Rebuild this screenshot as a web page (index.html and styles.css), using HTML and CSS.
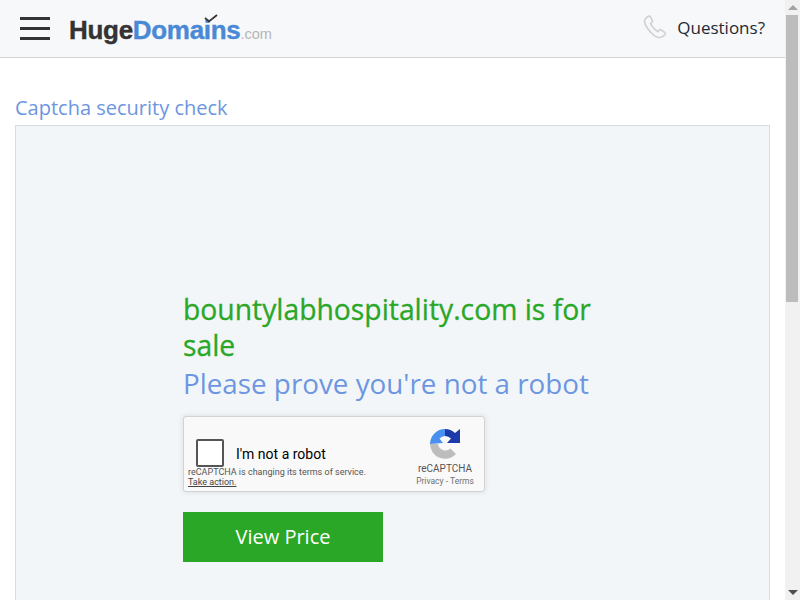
FILE: index.html
```html
<!DOCTYPE html>
<html lang="en">
<head>
<meta charset="UTF-8">
<meta name="viewport" content="width=device-width, initial-scale=1.0">
<title>Captcha security check</title>
<link rel="stylesheet" href="styles.css">
</head>
<body>

<div class="page">
    <header class="top-bar">
        <div class="top-left">
            <div class="burger"><span></span><span></span><span></span></div>
            <div class="logo">
                <span class="logo-huge">Huge</span><span class="logo-domains">Domains</span><span class="logo-com">.com</span>
                <svg class="logo-check" width="14" height="9" viewBox="0 0 14 9"><path d="M1 4 L5 7.5 L13 1" fill="none" stroke="#333" stroke-width="1.7"/></svg>
            </div>
        </div>
        <div class="top-right">
            <svg class="phone" width="24" height="24" viewBox="0 0 24 24"><path d="M5 1.5 L2.5 3.5 C0.5 5.5 1.5 9 5 14 C9 19.5 13 23 17 22.5 C19 22.3 21 21 22 19.5 C22.5 18.7 22.3 18 21.6 17.4 L18.3 15 C17.5 14.5 16.8 14.6 16.2 15.2 L14.8 16.6 C13 16 8.5 11 7.6 8.8 L9 7.2 C9.6 6.5 9.6 5.8 9.2 5 L7.3 1.9 C6.8 1.1 5.8 0.9 5 1.5 Z" fill="none" stroke="#cfd2d3" stroke-width="1.7" stroke-linejoin="round"/></svg>
            <span class="questions">Questions?</span>
        </div>
    </header>

    <main class="content">
        <h1 class="page-title">Captcha security check</h1>
        <section class="panel">
            <div class="panel-inner">
                <h2 class="sale-title">bountylabhospitality.com is for sale</h2>
                <p class="sale-sub">Please prove you're not a robot</p>
                <div class="recaptcha">
                    <div class="rc-main">
                        <div class="rc-row">
                            <div class="rc-box"></div>
                            <span class="rc-label">I'm not a robot</span>
                        </div>
                        <div class="rc-notice">reCAPTCHA is changing its terms of service.<br><span class="rc-link">Take action.</span></div>
                    </div>
                    <div class="rc-brand">
                        <svg class="rc-logo" width="32" height="32" viewBox="0 0 32 32">
                            <path d="M1 16 A15 15 0 0 1 16 1 L16 8 A8 8 0 0 0 10.5 10.5 L14 15 L1 16 Z" fill="#4a90f0"/>
                            <path d="M16 1 A15 15 0 0 1 26 5 L31 1 L31 15 L18 15 L22 10.5 A8 8 0 0 0 16 8 Z" fill="#1c3aa9"/>
                            <path d="M1 16 L9 16 A7.5 7.5 0 0 0 21.5 20.5 L27 26 A15 15 0 0 1 1 16 Z" fill="#bdbdbd"/>
                        </svg>
                        <div class="rc-name">reCAPTCHA</div>
                        <div class="rc-terms">Privacy - Terms</div>
                    </div>
                </div>
                <button class="view-price" type="button">View Price</button>
            </div>
        </section>
    </main>
</div>

<div class="scrollbar">
    <div class="arrow-up"></div>
    <div class="scroll-track"><div class="scroll-thumb"></div></div>
    <div class="arrow-down"></div>
</div>

</body>
</html>
```

FILE: styles.css
```css
html {
    overflow: hidden;
}
body {
    margin: 0;
    height: 600px;
    display: flex;
    overflow: hidden;
    font-family: "Open Sans", sans-serif;
    background: #ffffff;
}
.page {
    flex: 1;
    min-width: 0;
    height: 600px;
    overflow: hidden;
}
.scrollbar {
    width: 15px;
    height: 600px;
    background: #f1f1f1;
    display: flex;
    flex-direction: column;
    align-items: center;
}
.arrow-up {
    width: 0;
    height: 0;
    margin-top: 5px;
    margin-bottom: 5px;
    border-left: 5px solid transparent;
    border-right: 5px solid transparent;
    border-bottom: 5px solid #a3a3a3;
}
.scroll-track {
    flex: 1;
    width: 12px;
    margin-left: -1px;
}
.scroll-thumb {
    height: 287px;
    background: #bcbcbc;
}
.arrow-down {
    width: 0;
    height: 0;
    margin-top: 5px;
    margin-bottom: 5px;
    border-left: 5px solid transparent;
    border-right: 5px solid transparent;
    border-top: 5px solid #505050;
}
.top-bar {
    height: 57px;
    background: #f7f8fa;
    border-bottom: 1px solid #d3d3d3;
    display: flex;
    justify-content: space-between;
    align-items: center;
}
.top-left {
    display: flex;
    align-items: center;
    padding-left: 20px;
}
.burger {
    width: 30px;
    display: flex;
    flex-direction: column;
    gap: 7px;
}
.burger span {
    height: 3px;
    background: #333333;
}
.logo {
    position: relative;
    margin-left: 19px;
    margin-top: 4px;
    font-family: "Liberation Sans", sans-serif;
    font-weight: bold;
    font-size: 26px;
    letter-spacing: -0.3px;
    -webkit-text-stroke: 0.4px;
    white-space: nowrap;
}
.logo-huge {
    color: #333333;
}
.logo-domains {
    color: #4a89d6;
}
.logo-com {
    color: #b5b5b5;
    font-size: 14.5px;
    font-weight: normal;
    letter-spacing: 0;
    -webkit-text-stroke: 0;
}
.logo-check {
    position: absolute;
    left: 135px;
    top: -1px;
}
.top-right {
    display: flex;
    align-items: center;
    padding-right: 20px;
    padding-bottom: 3px;
}
.questions {
    margin-left: 10px;
    font-size: 17px;
    color: #1c2b36;
}
.content {
    padding: 0 15px;
}
.page-title {
    margin: 0;
    padding-top: 36px;
    font-size: 20px;
    line-height: 27px;
    font-weight: normal;
    color: #6d96e0;
}
.panel {
    box-sizing: border-box;
    height: 1060px;
    margin-top: 4px;
    background: #f3f6f9;
    border: 1px solid #d8dcdf;
    padding-top: 165px;
}
.panel-inner {
    width: 419px;
    margin: 0 auto;
}
.sale-title {
    margin: 0;
    font-size: 28.3px;
    line-height: 36px;
    font-weight: 500;
    -webkit-text-stroke: 0.3px;
    color: #2aa727;
}
.sale-sub {
    margin: 1px 0 0;
    font-size: 27.8px;
    line-height: 39px;
    color: #6d96e0;
}
.recaptcha {
    box-sizing: border-box;
    width: 302px;
    height: 76px;
    margin-top: 13px;
    background: #f9f9f9;
    border: 1px solid #d3d3d3;
    border-radius: 3px;
    box-shadow: 0 0 4px 1px rgba(0, 0, 0, 0.08);
    display: flex;
    justify-content: space-between;
    font-family: Roboto, sans-serif;
}
.rc-main {
    padding: 22px 0 0 4px;
}
.rc-row {
    display: flex;
    align-items: center;
    padding-left: 8px;
    height: 28px;
}
.rc-box {
    box-sizing: border-box;
    width: 28px;
    height: 28px;
    background: #ffffff;
    border: 2px solid #555555;
    border-radius: 2px;
}
.rc-label {
    margin-left: 12px;
    margin-top: 2px;
    font-size: 14px;
    color: #000000;
}
.rc-notice {
    font-size: 9px;
    line-height: 10px;
    color: #555555;
}
.rc-link {
    text-decoration: underline;
    color: #444444;
}
.rc-brand {
    width: 78px;
    padding-top: 11px;
    text-align: center;
    color: #555555;
}
.rc-logo {
    display: block;
    margin: 0 auto;
}
.rc-name {
    margin-top: 3px;
    font-size: 10px;
    line-height: 12px;
}
.rc-terms {
    margin-top: 1px;
    font-size: 8.5px;
    line-height: 10px;
    color: #717171;
}
.view-price {
    display: block;
    width: 200px;
    height: 50px;
    margin-top: 20px;
    padding: 0 0 2px;
    border: none;
    background: #2aa727;
    color: #ffffff;
    font-family: "Open Sans", sans-serif;
    font-size: 20px;
}
```
